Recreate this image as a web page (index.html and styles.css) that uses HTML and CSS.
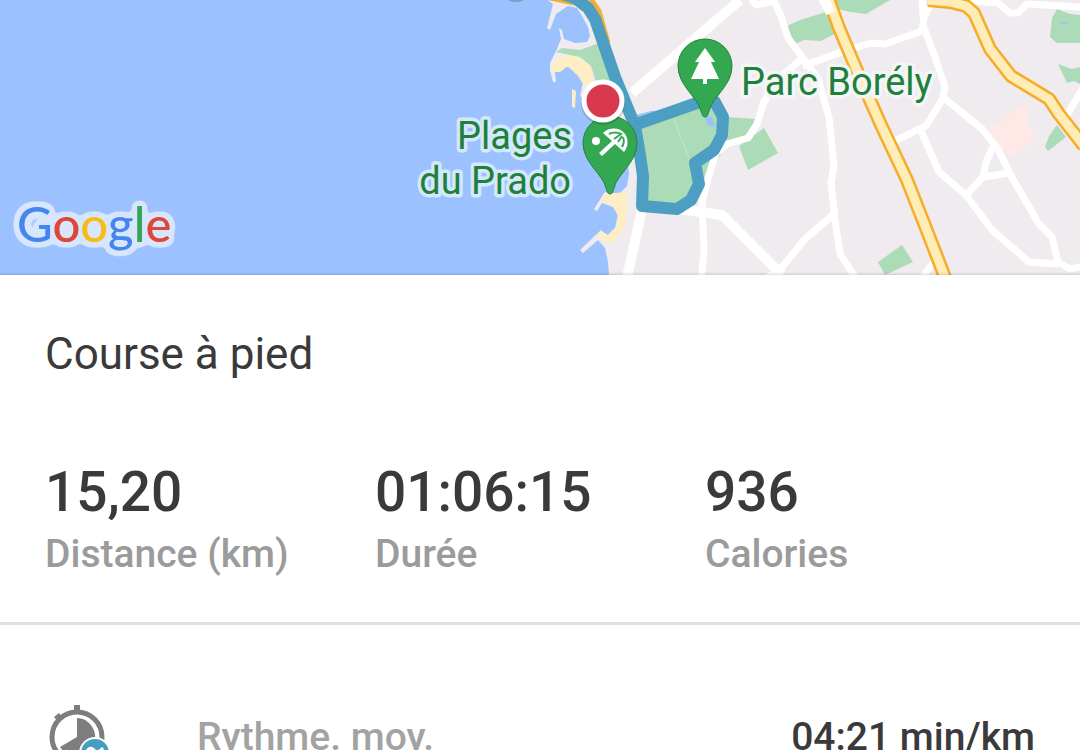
FILE: index.html
```
<!DOCTYPE html>
<html lang="fr">
<head>
  <meta charset="UTF-8">
  <meta name="viewport" content="width=device-width, initial-scale=1">
  <title>Course à pied</title>
  <link rel="stylesheet" href="styles.css">
</head>
<body>
  <!-- Route map -->
  <div class="map">
    <svg viewBox="0 0 1080 275" preserveAspectRatio="xMidYMax slice" role="img" aria-label="Parcours">
      <defs>
        <path id="pin" d="M0 51C-2 51-3 49-4 45C-7 31-27 20-27 0A27 27 0 0 1 27 0C27 20 7 31 4 45C3 49 2 51 0 51Z"/>
        <path id="avenue" d="M829 0L839 28L858 73L881 125L907 180L929 236L946 280"/>
        <path id="boulevard" d="M928 0L950 2L966 6L974 13L990 49L1011 76L1049 99L1059 114L1084 146"/>
        <!-- Pale outline behind the whole word -->
        <filter id="halo" x="-10%" y="-30%" width="120%" height="160%" color-interpolation-filters="sRGB">
          <feMorphology in="SourceAlpha" operator="dilate" radius="2"/>
          <feGaussianBlur stdDeviation="3"/>
          <feComponentTransfer result="shape">
            <feFuncA type="linear" slope="12" intercept="-1"/>
          </feComponentTransfer>
          <feFlood flood-color="#d7e6fc"/>
          <feComposite in2="shape" operator="in" result="outline"/>
          <feMerge>
            <feMergeNode in="outline"/>
            <feMergeNode in="SourceGraphic"/>
          </feMerge>
        </filter>
      </defs>

      <!-- Sea -->
      <path class="sea" d="M0 0H548L553 4L547 28L550 30L556 14L568 6L577 8L582 16L588 27L590 36L587 42L575 43L564 39L562 30L559 28L561 39L556 51L550 63L550 70L553 82L556 82L555 72L560 72L566 66L577 72L583 82L580 96L596 110L608 150L628 165L629 174L627 186L618 195L605 192L594 209L597 211L602 203L613 207L618 215L615 228L607 236L601 230L580 250L583 253L598 240L605 248L608 262L609 275H0Z"/>

      <!-- Beaches -->
      <path class="sand" d="M551 66L558 59L572 54L584 60L593 70L592 90L583 84L578 76L568 66L560 72L554 71Z"/>
      <path class="sand" d="M572 89L576 91L575 108L572 107Z"/>
      <path class="sand" d="M603 194L628 192L625 228L611 244L597 237L601 231L608 235L616 227L618 216L613 206L602 201Z"/>

      <!-- Parks -->
      <g class="park">
        <path d="M556 52L562 48L580 50L599 43L612 82L596 82L591 66L580 57Z"/>
        <path d="M636 124L700 101L717 99L728 117L755 119L751 130L742 139L728 142L703 184L690 202L644 204Z"/>
        <path d="M739 146L764 128L778 153L748 170Z"/>
        <path d="M787 26L800 20L826 12L838 32L821 41L804 40L795 44Z"/>
        <path d="M833 0H890L866 14L850 12L838 9Z"/>
        <path d="M1057 9L1070 14L1080 15V43H1057L1050 37L1052 18Z"/>
        <path d="M1058 64L1072 69L1080 67V84L1074 81L1067 83Z"/>
        <path d="M1057 125L1066 137L1048 151L1045 147L1049 136Z"/>
        <path d="M878 262L902 245L913 262L885 275Z"/>
      </g>
      <path class="sea" d="M636 115L651 111L667 110L691 98L675 108L640 120ZM704 115L712 117L715 126L709 127ZM1060 23L1071 22L1065 25Z"/>
      <path class="hospital" d="M987 129L1002 121L1002 115L1013 113L1017 108L1025 107L1030 113L1026 119L1036 137L1021 151L1008 156Z"/>
      <path class="footpath" d="M674 119L689 159"/>

      <!-- Streets -->
      <g class="street">
        <path class="wide" d="M632 93L740 0M642 209L626 282M678 209L722 215L782 275"/>
        <path d="M750 -3L756 5L774 1L781 16L788 38L803 58L818 79L829 117L834 165L831 183L835 220L840 254L857 280"/>
        <path d="M803 58L778 79L764 102L757 124L748 138L727 144L716 153L708 178L702 202L704 250L701 280"/>
        <path d="M803 66L847 50L871 43L885 44L922 31L924 18L934 -2"/>
        <path d="M922 0L924 28L935 57L945 87L943 98L926 126L888 144"/>
        <path d="M943 97L982 129L998 149L1010 174L1039 224L1052 237L1058 262L1070 269L1084 266"/>
        <path d="M921 131L939 172L966 195L992 230L1029 262L1058 264"/>
        <path d="M993 147L986 162L983 177L966 195M983 177L1010 173"/>
        <path d="M834 214L805 239L778 272L762 280"/>
        <path d="M965 0L998 3L1010 13L1018 13L1027 4L1080 7"/>
        <path d="M1066 117L1084 86M934 262L920 280"/>
      </g>

      <!-- Main roads -->
      <g class="road-edge"><use href="#avenue"/><use href="#boulevard"/></g>
      <g class="road-fill"><use href="#avenue"/><use href="#boulevard"/></g>
      <path class="street wide" d="M821 -6L831 13"/>
      <path class="coast-road" d="M550 -2L560 0L574 3M590 -2L599 11L608 43"/>

      <!-- Run -->
      <path class="route" d="M562 -6L575 -2L588 8L595 19L615 77L635 126L640 155L643 176L642 206L677 209L691 200L699 184L695 163L714 150L722 135L723 117L715 102L697 103L637 124"/>

      <!-- Places -->
      <use class="pin" href="#pin" x="705" y="66"/>
      <path class="glyph" d="M705 48L715 62H711L719 79H707V84H703V79H691L699 62H695Z"/>
      <use class="pin" href="#pin" x="610" y="143"/>
      <circle class="glyph" cx="596" cy="141" r="4"/>
      <path class="glyph" d="M603 133C609 127 620 127 625 134C629 140 628 147 624 152L615 144L602 156L599 153L612 141Z"/>
      <path class="rib" d="M609 134Q615 131 621 134L614 139M623 137Q625 142 622 147M622 136L618 142"/>
      <circle class="start-shadow" cx="516" cy="-15" r="17"/>
      <circle class="finish-shadow" cx="603" cy="103" r="22"/>
      <circle class="finish" cx="603" cy="101" r="19"/>

      <g class="place">
        <text x="741" y="95">Parc Borély</text>
        <text x="572" y="149" text-anchor="end">Plages</text>
        <text x="571" y="194" text-anchor="end">du Prado</text>
      </g>
      <text class="google" x="17" y="242" filter="url(#halo)"><tspan class="blue">G</tspan><tspan class="red">o</tspan><tspan class="yellow">o</tspan><tspan class="blue">g</tspan><tspan class="green">l</tspan><tspan class="red">e</tspan></text>
    </svg>
  </div>

  <main>
    <section class="summary">
      <h1>Course à pied</h1>
      <dl class="stats">
        <div class="stat">
          <dt>Distance (km)</dt>
          <dd>15,20</dd>
        </div>
        <div class="stat">
          <dt>Durée</dt>
          <dd>01:06:15</dd>
        </div>
        <div class="stat">
          <dt>Calories</dt>
          <dd>936</dd>
        </div>
      </dl>
    </section>

    <section class="detail-row">
      <svg class="detail-icon" viewBox="0 0 64 64" aria-hidden="true">
        <path class="watch" d="M29 2H35V8H29ZM9 14L14 10L18 15L13 19Z"/>
        <circle class="watch-ring" cx="32" cy="34" r="25"/>
        <path class="watch" d="M32 34V15A19 19 0 1 1 15 44Z"/>
        <circle class="badge" cx="50" cy="50" r="15"/>
        <path class="badge-line" d="M42 48Q45 43 49 47T58 45"/>
      </svg>
      <span class="detail-label">Rythme. moy.</span>
      <span class="detail-value">04:21 min/km</span>
    </section>
  </main>
</body>
</html>
```
FILE: styles.css
```
* {
  box-sizing: border-box;
}

body {
  margin: 0;
  height: 100vh;
  overflow: hidden;
  background: #fff;
  color: #3a3a3b;
  font-family: Roboto, sans-serif;
}

/* Map */
.map {
  position: relative;
  height: 275px;
  background: #efebee;
}

.map svg {
  display: block;
  width: 100%;
  height: 100%;
}

.map::after {
  content: "";
  position: absolute;
  left: 0;
  right: 0;
  bottom: 0;
  height: 3px;
  background: linear-gradient(transparent, rgba(0, 0, 0, 0.12));
}

.sea {
  fill: #9bc1ff;
}

.sand {
  fill: #ffeec4;
}

.park {
  fill: #acdcb7;
}

.hospital {
  fill: #ffe9e6;
}

.footpath {
  fill: none;
  stroke: #c5e5cb;
  stroke-width: 1;
}

.street {
  fill: none;
  stroke: #fff;
  stroke-width: 7;
  stroke-linejoin: round;
}

.wide {
  stroke-width: 10;
}

.road-edge,
.road-fill {
  fill: none;
  stroke: #f6ac29;
  stroke-width: 14;
  stroke-linejoin: round;
}

.road-fill {
  stroke: #ffedb8;
  stroke-width: 9;
}

.coast-road {
  fill: none;
  stroke: #f0ae35;
  stroke-width: 5;
}

.route {
  fill: none;
  stroke: #4c9fc2;
  stroke-width: 12;
  stroke-linejoin: round;
}

.pin {
  fill: #34a850;
  stroke: #24813a;
  stroke-width: 1;
}

.glyph {
  fill: #fff;
}

.rib {
  fill: none;
  stroke: #34a850;
  stroke-width: 2;
}

.start-shadow {
  fill: #7f9bc8;
}

.finish-shadow {
  fill: rgba(0, 0, 0, 0.15);
}

.finish {
  fill: #d8394f;
  stroke: #fff;
  stroke-width: 5;
}

.place {
  fill: #20803b;
  stroke: #f4f5f7;
  stroke-width: 7;
  stroke-linejoin: round;
  paint-order: stroke;
  font-size: 38px;
}

.place text:not(:first-child) {
  stroke: #d3e8fa;
}

.google {
  font-family: Lato, sans-serif;
  font-size: 49px;
  font-weight: 500;
}

.blue {
  fill: #4485ee;
}

.red {
  fill: #de4638;
}

.yellow {
  fill: #f5bd16;
}

.green {
  fill: #35a556;
}

/* Summary */
.summary {
  padding: 53px 45px 40px;
  border-bottom: 3px solid #e0e0e0;
}

h1 {
  margin: 0 0 82px;
  font-size: 44px;
  font-weight: 400;
  line-height: 52px;
}

.stats {
  display: grid;
  grid-template-columns: repeat(3, 1fr);
  margin: 0;
}

.stat {
  display: flex;
  flex-direction: column-reverse;
  gap: 4px;
}

.stat dt {
  color: #9b9b9b;
  font-size: 39px;
  font-weight: 500;
  line-height: 56px;
}

.stat dd {
  margin: 0;
  font-size: 55px;
  font-weight: 500;
  line-height: 60px;
}

/* Details */
.detail-row {
  display: flex;
  align-items: flex-start;
  padding: 78px 45px;
  font-size: 39px;
  font-weight: 500;
  line-height: 68px;
}

.detail-icon {
  width: 64px;
  height: 64px;
  margin-right: 88px;
}

.detail-label {
  flex: 1;
  color: #a3a3a3;
}

.watch {
  fill: #7e7e7e;
}

.watch-ring {
  fill: none;
  stroke: #7e7e7e;
  stroke-width: 5;
}

.badge {
  fill: #459fc0;
  stroke: #fff;
  stroke-width: 2;
}

.badge-line {
  fill: none;
  stroke: #fff;
  stroke-width: 3;
}
```
